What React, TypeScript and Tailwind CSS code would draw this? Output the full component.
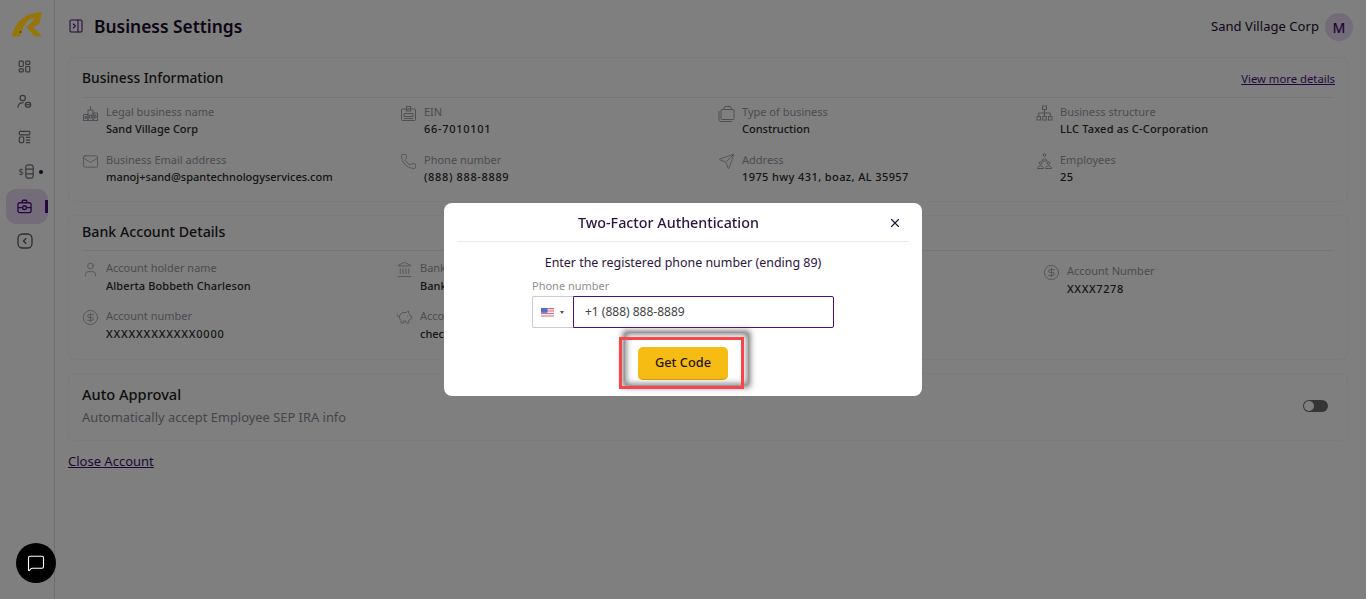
import { ReactNode } from 'react';
import {
  CircleDollarSign,
  Landmark,
  Mail,
  MessageSquare,
  PanelRightClose,
  Phone,
  PiggyBank,
  Send,
  User,
  X,
} from 'lucide-react';

const iconClass = 'w-[17px] h-[17px] text-[#a09ca6] shrink-0';
const navStroke = '#747078';

function Logo() {
  return (
    <svg width="30" height="25" viewBox="0 0 30 25" className="ml-[12px] relative z-10">
      <path
        d="M0 24.5 C2 13 10 1 30 0 L27.5 11 C26 13 24 14 21 15 L30 24.5 L23 24.5 L14 15 C18 12 21 10 22 6 C16 7 11 13 8 24.5 Z"
        fill="#96750a"
      />
      <circle cx="8.5" cy="20" r="0.8" fill="#2c1440" />
    </svg>
  );
}

function NavGrid() {
  return (
    <svg width="13" height="13" viewBox="0 0 16 16" fill="none" stroke={navStroke} strokeWidth="1.5">
      <rect x="1.5" y="1.5" width="5" height="6.5" rx="1" />
      <rect x="9.5" y="1.5" width="5" height="4" rx="1" />
      <rect x="1.5" y="11" width="5" height="3.5" rx="1" />
      <rect x="9.5" y="8" width="5" height="6.5" rx="1" />
    </svg>
  );
}

function NavUserLock() {
  return (
    <svg width="15" height="15" viewBox="0 0 17 17" fill="none" stroke={navStroke} strokeWidth="1.4">
      <circle cx="6.5" cy="4.5" r="3" />
      <path d="M1 15.5 C1 11.5 4 9.5 7.5 9.8" />
      <rect x="9.5" y="9.5" width="6" height="5.5" rx="2.5" />
      <path d="M10 12.2 H15" />
    </svg>
  );
}

function NavTable() {
  return (
    <svg width="14" height="14" viewBox="0 0 16 16" fill="none" stroke={navStroke} strokeWidth="1.4">
      <rect x="1.5" y="1.5" width="12" height="4" rx="1" />
      <rect x="1.5" y="8" width="5" height="6.5" rx="1" />
      <path d="M9 8.5 H14 M9 11.5 H14 M9 14.5 H14" />
    </svg>
  );
}

function NavCoins() {
  return (
    <div className="flex items-center gap-[5px] ml-[12px]">
      <span className="flex items-center text-[#747078] text-[9px] leading-none">
        $
        <svg width="9" height="15" viewBox="0 0 9 15" fill="none" stroke={navStroke} strokeWidth="1.2" className="ml-[1px]">
          <rect x="0.8" y="0.8" width="7.4" height="13.4" rx="2.5" />
          <path d="M0.8 5.2 H8.2 M0.8 9.8 H8.2" />
        </svg>
      </span>
      <span className="w-[4px] h-[4px] rounded-full bg-[#2c1440]" />
    </div>
  );
}

function NavBriefcase() {
  return (
    <svg width="15" height="15" viewBox="0 0 16 16" fill="none" stroke="#4b0f80" strokeWidth="1.4">
      <rect x="1" y="4" width="14" height="10.5" rx="2" />
      <path d="M5.5 4 V2.5 C5.5 1.8 6 1.3 6.7 1.3 H9.3 C10 1.3 10.5 1.8 10.5 2.5 V4" />
      <circle cx="8" cy="9.2" r="2" />
      <path d="M1 9.2 H5.5 M10.5 9.2 H15" />
    </svg>
  );
}

function NavBack() {
  return (
    <svg width="16" height="16" viewBox="0 0 16 16" fill="none" stroke="#5a5a5a" strokeWidth="1.3">
      <rect x="1" y="1" width="14" height="14" rx="4.5" />
      <path d="M9.2 5.2 L6.5 8 L9.2 10.8" />
    </svg>
  );
}

function BuildingIcon() {
  return (
    <svg viewBox="0 0 17 17" fill="none" stroke="currentColor" strokeWidth="1" className={iconClass}>
      <path d="M1 15.5 H16 M1.5 15.5 V9.5 H6 V15.5 M6 15.5 V5 H11 V15.5 M11 15.5 V8 H15.5 V15.5 M8.5 5 V1" />
      <path d="M3 11.5 H4.5 V13.5 H3 Z M12.5 10 H14 V13 H12.5 Z M7.5 10 H9.5 V13 H7.5 Z" />
    </svg>
  );
}

function BadgeIcon() {
  return (
    <svg viewBox="0 0 17 17" fill="none" stroke="currentColor" strokeWidth="1" className={iconClass}>
      <rect x="1.5" y="4" width="14" height="11.5" rx="1" />
      <rect x="6.5" y="1.5" width="4" height="4.5" />
      <path d="M4 8.5 H13 V11.5 H4 Z M4 13.5 H13" />
    </svg>
  );
}

function BagIcon() {
  return (
    <svg viewBox="0 0 17 17" fill="none" stroke="currentColor" strokeWidth="1" className={iconClass}>
      <rect x="3" y="4.5" width="13" height="10" rx="1" />
      <path d="M6 4.5 V2.5 C6 2 6.4 1.5 7 1.5 H12 C12.6 1.5 13 2 13 2.5 V4.5 M1 6 V15 C1 15.8 1.6 16.5 2.5 16.5 H14" />
    </svg>
  );
}

function PeopleIcon() {
  return (
    <svg viewBox="0 0 17 17" fill="none" stroke="currentColor" strokeWidth="1" className={iconClass}>
      <circle cx="8.5" cy="2" r="1.3" />
      <path d="M6 8 C6 5 11 5 11 8 Z" />
      <circle cx="4.5" cy="10" r="1.3" />
      <circle cx="12.5" cy="10" r="1.3" />
      <path d="M1.5 15.5 C1.5 12 7.5 12 7.5 15.5 Z M9.5 15.5 C9.5 12 15.5 12 15.5 15.5 Z" />
    </svg>
  );
}

function OrgIcon() {
  return (
    <svg viewBox="0 0 17 17" fill="none" stroke="currentColor" strokeWidth="1" className={iconClass}>
      <rect x="6.5" y="1" width="4" height="3.5" />
      <rect x="1" y="11.5" width="3.5" height="3.5" />
      <rect x="6.75" y="11.5" width="3.5" height="3.5" />
      <rect x="12.5" y="11.5" width="3.5" height="3.5" />
      <path d="M8.5 4.5 V11.5 M2.75 11.5 V8 H14.25 V11.5" />
    </svg>
  );
}

function Flag() {
  return (
    <svg width="13" height="9" viewBox="0 0 13 9">
      <rect width="13" height="9" fill="#f3f3f3" />
      <path d="M0 .6 H13 M0 3 H13 M0 5.5 H13 M0 8 H13" stroke="#e0677a" strokeWidth="1.1" />
      <rect width="6.5" height="4.8" fill="#4f6fcf" />
    </svg>
  );
}

function Field({
  icon,
  label,
  value,
  className = '',
  valueClass = 'mt-[1px]',
}: {
  icon: ReactNode;
  label: string;
  value: string;
  className?: string;
  valueClass?: string;
}) {
  return (
    <div className={`flex gap-[7px] ${className}`}>
      <div className="mt-[1px]">{icon}</div>
      <div>
        <div className="text-[11px] leading-[16px] text-[#9b96a2] whitespace-nowrap">{label}</div>
        <div className={`text-[11px] leading-[16px] font-medium text-[#2a2a2a] whitespace-nowrap ${valueClass}`}>{value}</div>
      </div>
    </div>
  );
}

function Card({ className = '', children }: { className?: string; children: ReactNode }) {
  return <section className={`border border-[#f7f6f8] rounded-[6px] px-[13px] ${className}`}>{children}</section>;
}

export default function App() {
  return (
    <div className="relative flex h-screen overflow-hidden bg-white text-[#1c1c1c] font-['Noto_Sans',sans-serif]">
      <aside className="w-[55px] shrink-0 border-r border-[#dcdcdc] pt-[12px] flex flex-col">
        <Logo />
        <nav className="mt-[12px] ml-[6px] w-[42px] flex flex-col items-center">
          <div className="h-[35px] pr-[5px] flex items-center"><NavGrid /></div>
          <div className="h-[35px] pr-[5px] flex items-center"><NavUserLock /></div>
          <div className="h-[35px] pr-[5px] flex items-center"><NavTable /></div>
          <div className="h-[35px] pr-[5px] flex items-center"><NavCoins /></div>
          <div className="relative w-[42px] h-[35px] pr-[6px] rounded-[10px] bg-[#e9d8f0] flex items-center justify-center">
            <NavBriefcase />
            <span className="absolute right-0 top-[11px] w-[3px] h-[13px] bg-[#4b0f80]" />
          </div>
          <div className="h-[35px] pr-[4px] pb-[1px] flex items-center"><NavBack /></div>
        </nav>
      </aside>

      <main className="flex-1 min-w-0 pl-[13px] pr-[18px]">
        <header className="h-[57px] flex items-start pt-[18px]">
          <PanelRightClose className="w-[16px] h-[16px] text-[#4b0f80]" strokeWidth={1.6} />
          <h1 className="ml-[10px] text-[17.4px] leading-[17px] font-semibold text-[#1a0a2b]">Business Settings</h1>
          <div className="ml-auto -mt-[5px] -mr-[5px] flex items-center gap-[6px]">
            <span className="text-[13px] tracking-[0.05px] text-[#1a0a2b]">Sand Village Corp</span>
            <span className="w-[28px] h-[28px] rounded-full bg-[#e9d8f0] text-[#3a0f66] flex items-center justify-center text-[14px] font-medium">M</span>
          </div>
        </header>

        <Card className="h-[145px]">
          <div className="h-[40px] border-b border-[#ececec] flex items-center justify-between">
            <h2 className="text-[13.8px] font-medium text-[#1c1c1c] mt-[1px]">Business Information</h2>
            <a className="text-[11.3px] underline text-[#4b0f80] mt-[3px] -mr-[1px]">View more details</a>
          </div>
          <div className="grid grid-cols-4 gap-x-[20px] gap-y-[15px] pt-[6px]">
            <Field icon={<BuildingIcon />} label="Legal business name" value="Sand Village Corp" />
            <Field icon={<BadgeIcon />} label="EIN" value="66-7010101" valueClass="mt-[1px] tracking-[0.7px]" />
            <Field icon={<BagIcon />} label="Type of business" value="Construction" />
            <Field icon={<OrgIcon />} label="Business structure" value="LLC Taxed as C-Corporation" valueClass="mt-[1px] tracking-[0.2px]" />
            <Field icon={<Mail className={iconClass} strokeWidth={1.2} />} label="Business Email address" value="manoj+sand@spantechnologyservices.com" />
            <Field icon={<Phone className={iconClass} strokeWidth={1.2} />} label="Phone number" value="(888) 888-8889" valueClass="mt-[1px] tracking-[0.65px]" />
            <Field icon={<Send className={iconClass} strokeWidth={1.2} />} label="Address" value="1975 hwy 431, boaz, AL 35957" valueClass="mt-[1px] tracking-[0.4px]" />
            <Field icon={<PeopleIcon />} label="Employees" value="25" valueClass="mt-[1px] tracking-[0.5px]" />
          </div>
        </Card>

        <Card className="h-[145px] mt-[13px]">
          <div className="h-[35px] pb-[2px] border-b border-[#ececec] flex items-center">
            <h2 className="text-[14.2px] font-medium text-[#1c1c1c]">Bank Account Details</h2>
          </div>
          <div className="grid grid-cols-[314px_324px_323px_1fr] gap-y-[11px] pt-[9px]">
            <Field icon={<User className={iconClass} strokeWidth={1.2} />} label="Account holder name" value="Alberta Bobbeth Charleson" valueClass="mt-[2px] tracking-[0.1px]" />
            <Field icon={<Landmark className={iconClass} strokeWidth={1.2} />} label="Bank name" value="Bank of America" valueClass="mt-[2px]" />
            {/* third column sits behind the dialog */}
            <div />
            <Field className="mt-[3px]" icon={<CircleDollarSign className={iconClass} strokeWidth={1.2} />} label="Account Number" value="XXXX7278" valueClass="mt-[2px] tracking-[0.6px]" />
            <Field icon={<CircleDollarSign className={iconClass} strokeWidth={1.2} />} label="Account number" value="XXXXXXXXXXXX0000" valueClass="mt-[2px] tracking-[0.8px]" />
            <Field icon={<PiggyBank className={iconClass} strokeWidth={1.2} />} label="Account type" value="checking" valueClass="mt-[2px]" />
          </div>
        </Card>

        <Card className="h-[68px] mt-[13px] flex items-start justify-between pt-[10px]">
          <div>
            <h2 className="text-[14.6px] leading-[20px] font-medium text-[#1c1c1c]">Auto Approval</h2>
            <p className="text-[12.9px] leading-[18px] mt-[4px] text-[#8d8994]">Automatically accept Employee SEP IRA info</p>
          </div>
          <span className="w-[25px] h-[12px] mt-[16px] mr-[6px] rounded-full bg-[#6b6b6b] p-[1px] flex items-center">
            <span className="w-[10px] h-[10px] rounded-full bg-white" />
          </span>
        </Card>

        <a className="block mt-[11px] text-[13px] underline text-[#3a0f66]">Close Account</a>
      </main>

      {/* dimmed backdrop and dialog */}
      <div className="fixed inset-0 bg-black/50 flex justify-center items-start pt-[203px]">
        <div className="w-[478px] h-[193px] bg-white rounded-[8px] px-[13px]">
          <div className="relative h-[39px] pt-[2px] border-b border-[#ececec] flex items-center pl-[121px]">
            <h3 className="text-[14.3px] font-medium text-[#2c1440]">Two-Factor Authentication</h3>
            <X className="absolute right-[7px] top-[13px] w-[14px] h-[14px] text-[#2c1440]" strokeWidth={2} />
          </div>
          <p className="mt-[12px] text-center text-[12.45px] leading-[18px] text-[#2c1440]">
            Enter the registered phone number (ending 89)
          </p>
          <div className="ml-[75px] w-[302px]">
            <label className="block mt-[7px] text-[11px] leading-[14px] text-[#8f8f8f]">Phone number</label>
            <div className="mt-[3px] flex h-[32px]">
              <div className="w-[41px] border border-r-0 border-[#cfc8d6] rounded-l-[2px] flex items-center pl-[8px] gap-[6px]">
                <Flag />
                <span className="w-0 h-0 border-x-[2.5px] border-x-transparent border-t-[3px] border-t-[#555]" />
              </div>
              <div className="flex-1 border border-[#4b0f80] rounded-r-[2px] flex items-center pl-[11px] text-[12px] text-[#444]">
                +1 (888) 888-8889
              </div>
            </div>
          </div>
          <div className="mt-[19px] flex justify-center">
            <div className="relative">
              <button className="block w-[90px] h-[33px] rounded-[5px] bg-[#f7bc14] border-b border-[#d9a410] text-[12.8px] font-medium text-[#1c1408]">
                Get Code
              </button>
              <span className="absolute -left-[13px] -top-[14px] w-[123px] h-[52px] shadow-[0_0_6px_2px_rgba(80,80,80,0.85),inset_0_0_6px_1px_rgba(80,80,80,0.8)]" />
              <span className="absolute -left-[19px] -top-[10px] w-[125px] h-[52px] border-[3px] border-[#f94449]" />
            </div>
          </div>
        </div>
      </div>

      <button className="fixed left-[16px] bottom-[16px] w-[40px] h-[40px] rounded-full bg-black flex items-center justify-center">
        <MessageSquare className="w-[18px] h-[18px] text-white" strokeWidth={1.5} />
      </button>
    </div>
  );
}
